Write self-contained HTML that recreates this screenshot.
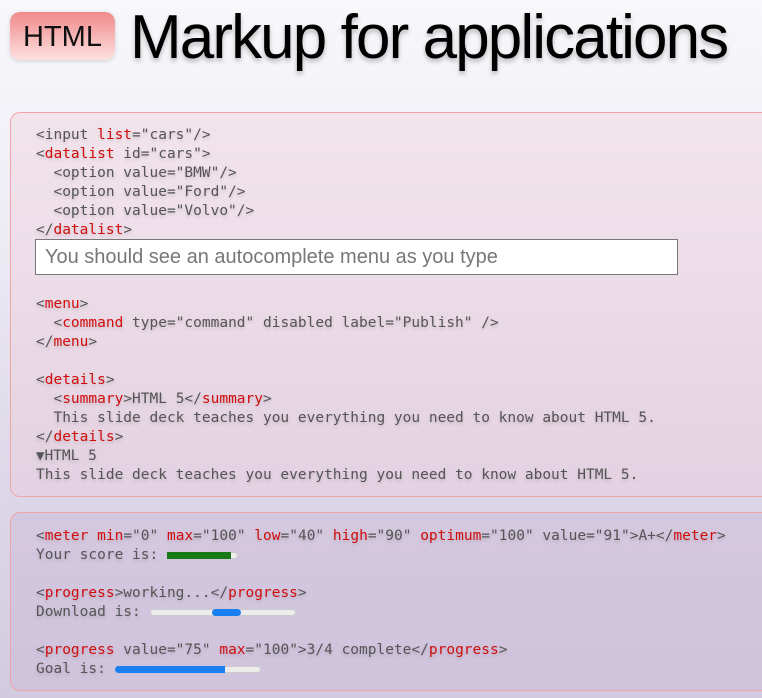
<!DOCTYPE html>
<html><head><meta charset="utf-8"><style>
html,body{margin:0;padding:0}
body{width:762px;height:698px;overflow:hidden;position:relative;background:linear-gradient(180deg,#f8f8fb 0%,#eeedf5 30%,#e0dcea 60%,#d2cbe0 100%);font-family:"Liberation Sans",sans-serif}
.badge{position:absolute;left:10px;top:12px;width:105px;height:48px;border-radius:10px;background:linear-gradient(180deg,#f08a8a,#fde0e0);box-shadow:0 1px 4px rgba(0,0,0,.15);font-size:29px;color:#111;text-align:center;line-height:50px}
h1{position:absolute;left:130px;top:2px;margin:0;font-weight:normal;font-size:62px;letter-spacing:-1.9px;color:#000;text-shadow:0 3px 5px rgba(0,0,0,.25);white-space:nowrap}
.box{position:absolute;left:10px;width:770px;border:1px solid #efa5a8;border-radius:10px;background:rgba(240,200,215,.35)}
pre{position:absolute;left:36px;margin:0;font-family:"DejaVu Sans Mono","Liberation Mono",monospace;font-size:14.5px;line-height:19px;color:#555;text-shadow:0 2px 3px rgba(0,0,0,.15)}
b{font-weight:normal;color:#d10d0d}
.inp{position:absolute;left:35px;top:239px;border:1px solid #777;background:#fff;font-size:20px;color:#777;line-height:34px;padding-left:9px;box-sizing:border-box;width:643px;height:36px}
.bar{display:inline-block;height:7px;border-radius:4px;background:#ececec;vertical-align:middle;position:relative;border:1px solid #ccc;box-sizing:border-box}
.fill{position:absolute;top:-1px;height:7px;border-radius:4px}
</style></head><body>
<div class="badge">HTML</div>
<h1>Markup for applications</h1>
<div class="box" style="top:112px;height:383px"></div>
<div class="box" style="top:512px;height:177px;background:rgba(205,185,215,.45)"></div>
<pre style="top:126px">&lt;input <b>list</b>="cars"/&gt;
&lt;<b>datalist</b> id="cars"&gt;
  &lt;option value="BMW"/&gt;
  &lt;option value="Ford"/&gt;
  &lt;option value="Volvo"/&gt;
&lt;/<b>datalist</b>&gt;</pre>
<div class="inp">You should see an autocomplete menu as you type</div>
<pre style="top:295px">&lt;<b>menu</b>&gt;
  &lt;<b>command</b> type="command" disabled label="Publish" /&gt;
&lt;/<b>menu</b>&gt;

&lt;<b>details</b>&gt;
  &lt;<b>summary</b>&gt;HTML 5&lt;/<b>summary</b>&gt;
  This slide deck teaches you everything you need to know about HTML 5.
&lt;/<b>details</b>&gt;
<span style="font-size:14px">&#9660;</span>HTML 5
This slide deck teaches you everything you need to know about HTML 5.</pre>
<pre style="top:527px">&lt;<b>meter</b> <b>min</b>="0" <b>max</b>="100" <b>low</b>="40" <b>high</b>="90" <b>optimum</b>="100" value="91"&gt;A+&lt;/<b>meter</b>&gt;
Your score is: <span class="bar" style="width:71px"><span class="fill" style="left:-1px;width:64px;background:#177a17;border-radius:0"></span></span>

&lt;<b>progress</b>&gt;working...&lt;/<b>progress</b>&gt;
Download is: <span class="bar" style="width:146px"><span class="fill" style="left:61px;width:29px;background:#1a7ff0"></span></span>

&lt;<b>progress</b> value="75" <b>max</b>="100"&gt;3/4 complete&lt;/<b>progress</b>&gt;
Goal is: <span class="bar" style="width:146px"><span class="fill" style="left:-1px;width:110px;background:#1a7ff0;border-radius:4px 0 0 4px"></span></span></pre>
</body></html>
